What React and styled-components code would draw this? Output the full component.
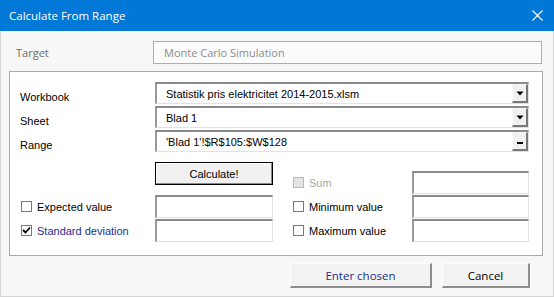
import React from "react";
import styled, { createGlobalStyle, css } from "styled-components";

const GlobalStyle = createGlobalStyle`
  html, body { margin: 0; padding: 0; background: #f7f7f7; }
  #root { width: 554px; height: 297px; }
`;

const uiFont = `"Open Sans", "Noto Sans", Arial, sans-serif`;
const formFont = `"Liberation Sans", Arial, sans-serif`;

const Window = styled.div`
    width: 554px;
    height: 297px;
    box-sizing: border-box;
    display: flex;
    flex-direction: column;
    background: #f7f7f7;
    border: 1px solid #d4d4d4;
    border-top: none;
`

const TitleBar = styled.div`
    height: 31px;
    margin: 0 -1px;
    background: #0078d7;
    color: #fff;
    display: flex;
    align-items: center;
    justify-content: space-between;
    padding: 0 11px 0 9px;
    font-family: ${uiFont};
    font-size: 11.5px;
`

const Body = styled.div`
    flex: 1;
    display: flex;
    flex-direction: column;
    padding: 10px 10px 0 7px;
`

const TargetRow = styled.div`
    display: grid;
    grid-template-columns: 145px 389px;
    align-items: center;
    height: 23px;
`

const TargetLabel = styled.div`
    padding-left: 8px;
    font-family: ${uiFont};
    font-size: 11px;
    color: #6d6d6d;
`

const FlatInput = styled.div`
    height: 23px;
    box-sizing: border-box;
    border: 1px solid #adadad;
    background: #fbfbfb;
    color: #8c8c8c;
    font-family: ${uiFont};
    font-size: 11px;
    padding-left: 10px;
    display: flex;
    align-items: center;
`

const GroupBox = styled.div`
    margin-top: 7px;
    margin-left: 1px;
    width: 534px;
    height: 185px;
    box-sizing: border-box;
    border: 1px solid #a9a9a9;
    background: #fff;
    padding: 10px 13px 0 10px;
`

const ComboGrid = styled.div`
    display: grid;
    grid-template-columns: 135px 374px;
    grid-auto-rows: 22px;
    row-gap: 2px;
`

const FieldLabel = styled.div`
    font-family: ${formFont};
    font-size: 11px;
    color: #000;
    padding-top: 9px;
    ${props => props.blue && css`color: #1c2f8f;`}
    ${props => props.disabled && css`color: #a8a8a8;`}
`

const sunken = css`
    box-sizing: border-box;
    background: #fff;
    border-style: solid;
    border-width: 2px 1px 1px 2px;
    border-color: #8a8a8a #e2e2e2 #e2e2e2 #9a9a9a;
`

const Combo = styled.div`
    ${sunken}
    display: flex;
    align-items: center;
    padding-left: 9px;
    font-family: ${formFont};
    font-size: 11px;
    color: #000;
`

const ComboText = styled.div`
    flex: 1;
    white-space: nowrap;
    overflow: hidden;
`

const DropButton = styled.div`
    width: 16px;
    height: 19px;
    box-sizing: border-box;
    background: #f0f0f0;
    border-style: solid;
    border-width: 1px 2px 2px 1px;
    border-color: #fafafa #777 #777 #fafafa;
    display: flex;
    align-items: center;
    justify-content: center;
`

const LowerGrid = styled.div`
    margin-top: 10px;
    display: grid;
    grid-template-columns: 135px 118px 19px 120px 117px;
    grid-template-rows: 32px 23px 23px;
    row-gap: 1px;
`

const TextBox = styled.div`
    ${sunken}
    align-self: end;
    height: 23px;
    ${props => props.col && css`grid-column: ${props.col};`}
`

const CalcButton = styled.button`
    grid-column: 2;
    align-self: start;
    height: 23px;
    padding: 0;
    background: #f1f1f1;
    border: 1px solid #000;
    box-shadow: inset -1px -1px #8a8a8a, inset 1px 1px #fff;
    font-family: ${formFont};
    font-size: 11px;
    color: #000;
`

const CheckRow = styled.label`
    display: flex;
    align-items: center;
    gap: 5px;
    align-self: end;
    height: 23px;
    padding-left: 1px;
    ${props => props.col && css`grid-column: ${props.col};`}
    ${FieldLabel} { padding-top: 0; }
`

const Box = styled.span`
    width: 11px;
    height: 11px;
    box-sizing: border-box;
    border: 1px solid #7a7a7a;
    background: #fff;
    display: flex;
    align-items: center;
    justify-content: center;
    ${props => props.disabled && css`
        border-color: #b8b8b8;
        background: #e4e4e4;
    `}
`

const Footer = styled.div`
    display: flex;
    justify-content: flex-end;
    gap: 10px;
    padding: 7px 13px 0 0;
`

const DialogButton = styled.button`
    width: ${props => props.w}px;
    height: 25px;
    padding: 0;
    background: #f3f3f3;
    border-style: solid;
    border-width: 1px 2px 2px 1px;
    border-color: #fdfdfd #8e8e8e #8e8e8e #fdfdfd;
    font-family: ${uiFont};
    font-size: 11.5px;
    color: ${props => props.blue ? "#1c2f8f" : "#000"};
`

function CheckBox({ label, checked, disabled, blue, col }) {
    return (
        <CheckRow col={col}>
            <Box disabled={disabled}>
                {checked && (
                    <svg width="9" height="9" viewBox="0 0 9 9">
                        <path d="M1 4 L3.5 6.5 L8 1.5" stroke="#000" strokeWidth="1.8" fill="none" />
                    </svg>
                )}
            </Box>
            <FieldLabel blue={blue} disabled={disabled}>{label}</FieldLabel>
        </CheckRow>
    );
}

function ComboField({ label, value, ellipsis }) {
    return (
        <>
            <FieldLabel>{label}</FieldLabel>
            <Combo>
                <ComboText>{value}</ComboText>
                <DropButton>
                    {ellipsis ? (
                        <svg width="8" height="8" viewBox="0 0 8 8">
                            <rect x="1" y="5" width="6" height="2" fill="#000" />
                        </svg>
                    ) : (
                        <svg width="8" height="5" viewBox="0 0 8 5">
                            <path d="M0.5 0.5 H7.5 L4 4.5 Z" fill="#000" />
                        </svg>
                    )}
                </DropButton>
            </Combo>
        </>
    );
}

export default function App() {
    return (
        <Window>
            <GlobalStyle />
            <TitleBar>
                <span>Calculate From Range</span>
                <svg width="11" height="11" viewBox="0 0 11 11">
                    <path d="M0.5 0.5 L10.5 10.5 M10.5 0.5 L0.5 10.5" stroke="#fff" strokeWidth="1.1" />
                </svg>
            </TitleBar>
            <Body>
                <TargetRow>
                    <TargetLabel>Target</TargetLabel>
                    <FlatInput>Monte Carlo Simulation</FlatInput>
                </TargetRow>
                <GroupBox>
                    <ComboGrid>
                        <ComboField label="Workbook" value="Statistik pris elektricitet 2014-2015.xlsm" />
                        <ComboField label="Sheet" value="Blad 1" />
                        <ComboField label="Range" value="'Blad 1'!$R$105:$W$128" ellipsis />
                    </ComboGrid>
                    <LowerGrid>
                        <CalcButton>Calculate!</CalcButton>
                        <CheckBox col={4} label="Sum" disabled />
                        <TextBox col={5} />
                        <CheckBox col={1} label="Expected value" />
                        <TextBox col={2} />
                        <CheckBox col={4} label="Minimum value" />
                        <TextBox col={5} />
                        <CheckBox col={1} label="Standard deviation" checked blue />
                        <TextBox col={2} />
                        <CheckBox col={4} label="Maximum value" />
                        <TextBox col={5} />
                    </LowerGrid>
                </GroupBox>
                <Footer>
                    <DialogButton w={142} blue>Enter chosen</DialogButton>
                    <DialogButton w={88}>Cancel</DialogButton>
                </Footer>
            </Body>
        </Window>
    );
}
